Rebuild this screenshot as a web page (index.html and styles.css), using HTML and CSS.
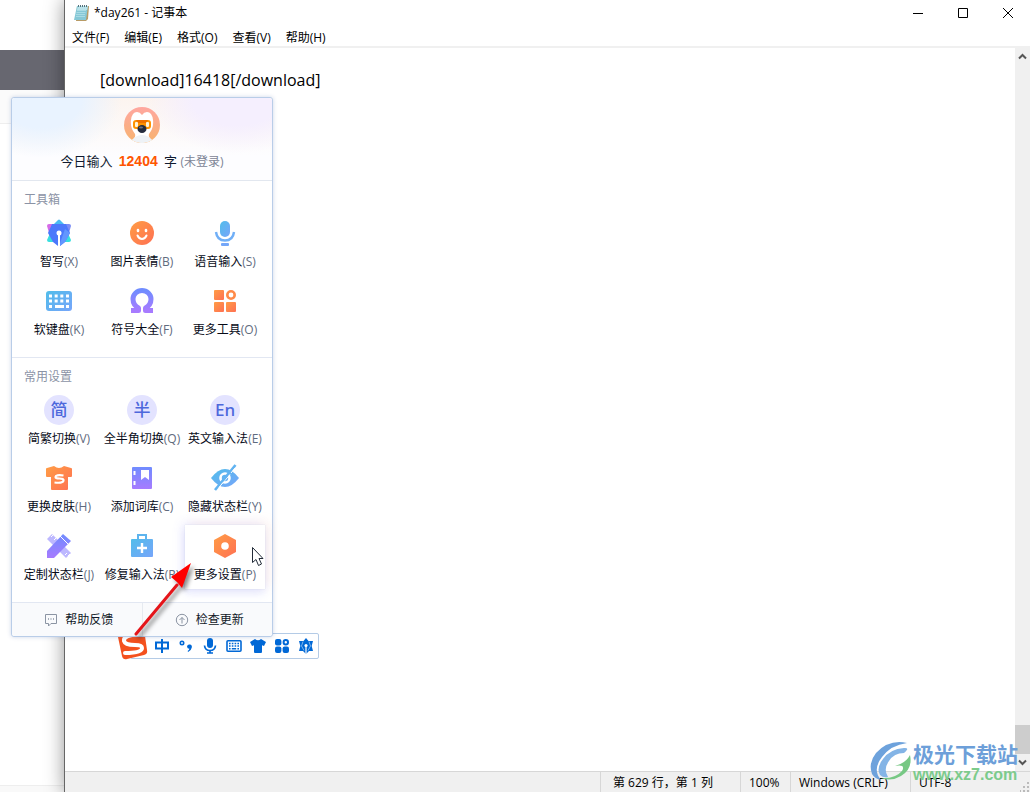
FILE: index.html
```html
<!DOCTYPE html>
<html lang="zh-CN">
<head>
<meta charset="utf-8">
<title>*day261 - 记事本</title>
<link rel="stylesheet" href="styles.css">
</head>
<body>
<div class="desktop">
  <div class="backdrop" aria-hidden="true">
    <div class="backdrop-top"></div>
    <div class="backdrop-band"></div>
    <div class="backdrop-tint"></div>
    <div class="backdrop-body"></div>
    <div class="backdrop-foot"></div>
  </div>

  <main class="window">
    <header class="titlebar">
      <svg class="app-icon" width="17" height="18" viewBox="0 0 17 18">
        <path d="M4 2h12l-1 13-2 2H3z" fill="#b89b66"/>
        <path d="M4 2h11l-2 14H1z" fill="#86c8d6"/>
        <path d="M5 2h10l-1 4H4z" fill="#b9e2ea"/>
        <path d="M4 6.500h9M3.500 8.500h9M3 10.500h9M3 12.500h9" stroke="#a9dbe4"/>
        <path d="M5.500 1v2M7.500 1v2M9.500 1v2M11.500 1v2M13.500 1v2" stroke="#54717a"/>
      </svg>
      <h1 class="title">*day261 - 记事本</h1>
      <div class="window-buttons">
        <button class="winbtn" aria-label="最小化"><svg width="12" height="12" viewBox="0 0 12 12"><path d="M1 6.500h10" stroke="#000"/></svg></button>
        <button class="winbtn" aria-label="最大化"><svg width="12" height="12" viewBox="0 0 12 12"><path d="M1.500 1.500h9v9h-9z" stroke="#000" fill="none"/></svg></button>
        <button class="winbtn" aria-label="关闭"><svg width="12" height="12" viewBox="0 0 12 12"><path d="M1 1l10 10M11 1L1 11" stroke="#000"/></svg></button>
      </div>
    </header>
    <nav class="menubar">
      <button>文件(F)</button><button>编辑(E)</button><button>格式(O)</button><button>查看(V)</button><button>帮助(H)</button>
    </nav>
    <div class="editor">
      <textarea class="text" aria-label="文本编辑器" spellcheck="false">[download]16418[/download]</textarea>
      <div class="scrollbar">
        <button class="scroll-btn" aria-label="向上滚动"><svg width="9" height="7" viewBox="0 0 9 7"><path d="M1 5.500L4.500 2 8 5.500" fill="none" stroke="#555" stroke-width="2"/></svg></button>
        <div class="track"><div class="thumb"></div></div>
        <button class="scroll-btn" aria-label="向下滚动"><svg width="9" height="7" viewBox="0 0 9 7"><path d="M1 1.500L4.500 5 8 1.500" fill="none" stroke="#555" stroke-width="2"/></svg></button>
      </div>
    </div>
    <footer class="statusbar">
      <span class="cell pos">第 629 行，第 1 列</span>
      <span class="cell zoom">100%</span>
      <span class="cell eol">Windows (CRLF)</span>
      <span class="cell enc">UTF-8</span>
      <svg class="grip" width="10" height="10" viewBox="0 0 10 10" fill="#bbb"><path d="M7 0h2v2H7zM7 4h2v2H7zM7 8h2v2H7zM3 4h2v2H3zM3 8h2v2H3zM0 8h1v2H0z"/></svg>
    </footer>
  </main>

  <div class="ime-bar">
    <button aria-label="中文">
      <svg width="16" height="16" viewBox="0 0 16 16"><path d="M2 4.500h12v6H2zM8 1v14" fill="none" stroke="#0068d6" stroke-width="2"/></svg>
    </button>
    <button aria-label="标点">
      <svg width="16" height="16" viewBox="0 0 16 16"><circle cx="4" cy="5" r="1.700" fill="none" stroke="#0068d6" stroke-width="1.600"/><path d="M9 8.500a2.400 2.400 0 1 1 4.800 1q-.6 3.300-3.700 4.500l-.5-1q1.600-.8 1.800-2.200-2.200 0-2.400-2.300z" fill="#0068d6"/></svg>
    </button>
    <button aria-label="语音">
      <svg width="16" height="16" viewBox="0 0 16 16"><rect x="5" y="0" width="6" height="10" rx="3" fill="#0068d6"/><path d="M2.500 7.500q.5 5 5.500 5t5.500-5M8 12v3M5 15h6" fill="none" stroke="#0068d6" stroke-width="1.700"/></svg>
    </button>
    <button aria-label="键盘">
      <svg width="16" height="16" viewBox="0 0 16 16"><rect x="1" y="2.800" width="14" height="10.400" rx="1" fill="#fff" stroke="#0068d6" stroke-width="1.600"/><path d="M3 5.500h10M3 8h10" stroke="#0068d6" stroke-width="1.600" stroke-dasharray="1.600 1.200"/><path d="M3 10.700h1.600M5.800 10.700h4.400M11.400 10.700H13" stroke="#0068d6" stroke-width="1.600"/></svg>
    </button>
    <button aria-label="皮肤">
      <svg width="16" height="16" viewBox="0 0 16 16"><path d="M5 1q3 2.500 6 0l5 3-2 4-2-.8V14q0 1-1 1H5q-1 0-1-1V7.200L2 8 0 4z" fill="#0068d6"/></svg>
    </button>
    <button aria-label="工具">
      <svg width="16" height="16" viewBox="0 0 16 16" fill="#0068d6"><rect x="1" y="1" width="6.400" height="6.400" rx="2"/><rect x="1" y="8.600" width="6.400" height="6.400" rx="2"/><rect x="8.600" y="8.600" width="6.400" height="6.400" rx="2"/><circle cx="11.800" cy="4.200" r="2.200" fill="none" stroke="#0068d6" stroke-width="2"/></svg>
    </button>
    <button aria-label="智写">
      <svg width="16" height="16" viewBox="0 0 16 16"><path d="M8 0l2.500 3H15l-1.300 5L15 13h-4l-3 3-3-3H1l1.300-5L1 3h4.500z" fill="#0068d6"/><path d="M5 3.500L3.500 8 6 12.500M11 3.500L12.500 8 10 12.500" fill="none" stroke="#fff" stroke-width=".5"/><path d="M8 8v8" stroke="#fff" stroke-width="1.200"/><circle cx="8" cy="7.500" r="1.600" fill="#fff"/></svg>
    </button>
    <svg class="ime-logo" width="32" height="28" viewBox="0 0 32 28">
      <path d="M1 5Q0 2 3 1l21-1q3 0 4 4l2 14q1 4-3 5L10 27q-4 1-5-3z" fill="#f4511e"/>
      <path d="M25 3Q6 2 7 9q1 4 11 4 7 0 7 3 0 5-17 5" fill="none" stroke="#fff" stroke-width="4" stroke-linecap="round"/>
    </svg>
  </div>

  <section class="popup" aria-label="输入法菜单">
    <svg class="defs" width="0" height="0" aria-hidden="true">
      <defs>
        <linearGradient id="orange" x1="0" y1="0" x2="1" y2="1"><stop stop-color="#ff9d45"/><stop offset="1" stop-color="#ff7053"/></linearGradient>
        <linearGradient id="blue" x1="0" y1="0" x2="1" y2="1"><stop stop-color="#51bdea"/><stop offset="1" stop-color="#77a5fa"/></linearGradient>
        <linearGradient id="violet" x1="0" y1="0" x2="0" y2="1"><stop stop-color="#708cff"/><stop offset="1" stop-color="#a77bff"/></linearGradient>
        <linearGradient id="skin" x1="0" y1="0" x2="0" y2="1"><stop stop-color="#ffa7a0"/><stop offset="1" stop-color="#f7b36e"/></linearGradient>
      </defs>
    </svg>

    <header class="profile">
      <svg class="avatar" width="38" height="38" viewBox="0 0 38 38">
        <circle cx="19" cy="19" r="18" fill="url(#skin)"/>
        <path d="M9 34q4-2 3-6-5-6-4-14 1-8 6-8 3 0 5 3 2-3 5-3 5 0 6 8 1 8-4 14-1 4 3 6-10 6-20 0z" fill="#fff"/>
        <path d="M12 31q7-4 14 0l3 3q-10 6-20 0z" fill="#eef2f6"/>
        <rect x="10" y="14" width="18" height="9" rx="3" fill="#ff9200"/>
        <path d="M13 14h12l-2 3h-8z" fill="#ef7100"/>
        <rect x="12" y="16" width="3" height="5" rx="1" fill="#fff3d8"/><rect x="23" y="16" width="3" height="5" rx="1" fill="#fff3d8"/>
        <ellipse cx="19" cy="23" rx="4.500" ry="4" fill="#252c3d"/><ellipse cx="18" cy="21.500" rx="2" ry="1" fill="#6b7080"/>
      </svg>
      <p class="count">今日输入 <strong>12404</strong> 字 <button class="login">(未登录)</button></p>
    </header>

    <section class="group">
      <h2>工具箱</h2>
      <div class="grid">
        <button class="item">
          <svg width="30" height="30" viewBox="0 0 30 30"><path d="M3 8q0-2 2-2h8L6 18z" fill="#d66be8"/><path d="M27 8q0-2-2-2h-8l7 12z" fill="#7a8cf5"/><path d="M3 22l4-9 5 11H5q-2 0-2-2zM27 22l-4-9-5 11h7q2 0 2-2z" fill="#38dfdf"/><path d="M14 2q1-1 2 0l6 6H8z" fill="#49baf2"/><path d="M8 6h14l4 9-5 9-5 4h-2l-5-4-5-9z" fill="#4b78fb"/><path d="M21 11l5 4-5 9-5 4h-1z" fill="#6296ff"/><path d="M15 16v14" stroke="#fff" stroke-width="2"/><circle cx="15" cy="15" r="2.500" fill="#fff"/></svg>
          <span>智写<i>(X)</i></span></button>
        <button class="item">
          <svg width="30" height="30" viewBox="0 0 30 30"><circle cx="15" cy="15" r="12" fill="url(#orange)"/><path d="M11 12v1M19 12v1" stroke="#fff" stroke-width="2.600" stroke-linecap="round"/><path d="M10.500 17.500q1.500 3.500 4.500 3.500t4.500-3.500" fill="none" stroke="#fff" stroke-width="2" stroke-linecap="round"/></svg>
          <span>图片表情<i>(B)</i></span></button>
        <button class="item">
          <svg width="30" height="30" viewBox="0 0 30 30"><rect x="10" y="3" width="10" height="16" rx="5" fill="url(#blue)"/><path d="M6 14q1 8.500 9 8.500t9-8.500" fill="none" stroke="#70aff7" stroke-width="2.400"/><rect x="11" y="25" width="8" height="3" rx="1" fill="#74a7f9"/></svg>
          <span>语音输入<i>(S)</i></span></button>
        <button class="item">
          <svg width="30" height="30" viewBox="0 0 30 30"><rect x="2" y="5" width="26" height="20" rx="3" fill="url(#blue)"/><path d="M5 10h20M5 15h20" stroke="#fff" stroke-width="3" stroke-dasharray="3 2.660"/><path d="M5 20.500h3M11 20.500h9M22 20.500h3" stroke="#fff" stroke-width="3"/></svg>
          <span>软键盘<i>(K)</i></span></button>
        <button class="item">
          <svg width="30" height="30" viewBox="0 0 30 30"><path d="M4 24.500h7.500v-2.500Q6 19 6 13a9 8.500 0 0 1 18 0q0 6-5.500 9v2.500H26" fill="none" stroke="url(#violet)" stroke-width="5" stroke-linejoin="round"/></svg>
          <span>符号大全<i>(F)</i></span></button>
        <button class="item">
          <svg width="30" height="30" viewBox="0 0 30 30" fill="url(#orange)"><rect x="4" y="4" width="10" height="10" rx="1"/><rect x="4" y="16" width="10" height="10" rx="1"/><rect x="16" y="16" width="10" height="10" rx="1"/><circle cx="21" cy="9" r="3.700" fill="none" stroke="#ff8a49" stroke-width="2.600"/></svg>
          <span>更多工具<i>(O)</i></span></button>
      </div>
    </section>

    <section class="group">
      <h2>常用设置</h2>
      <div class="grid">
        <button class="item"><b class="disc">简</b><span>简繁切换<i>(V)</i></span></button>
        <button class="item"><b class="disc">半</b><span>全半角切换<i>(Q)</i></span></button>
        <button class="item"><b class="disc">En</b><span>英文输入法<i>(E)</i></span></button>
        <button class="item">
          <svg width="30" height="30" viewBox="0 0 30 30"><path d="M10 3q5 4 10 0l7 2q1 0 1 1v7q0 1-1 1h-3v12q0 1-1 1H8q-1 0-1-1V14H3q-1 0-1-1V6q0-1 1-1z" fill="url(#orange)"/><path d="M19.500 12.500q-8-1-8 1.500 0 1.500 4 1.500 4.500 0 4 2-.5 3-9 2" fill="none" stroke="#fff" stroke-width="2.200"/></svg>
          <span>更换皮肤<i>(H)</i></span></button>
        <button class="item">
          <svg width="30" height="30" viewBox="0 0 30 30"><rect x="5" y="4" width="20" height="22" rx="1" fill="url(#violet)"/><path d="M14 7h8v10l-4-3-4 3z" fill="#fff"/><path d="M7.500 8v4M7.500 18v4" stroke="#fff" stroke-width="2"/></svg>
          <span>添加词库<i>(C)</i></span></button>
        <button class="item">
          <svg width="30" height="30" viewBox="0 0 30 30"><path d="M1 15Q8 6 15 6t14 9q-7 9-14 9T1 15z" fill="url(#blue)"/><circle cx="15" cy="15" r="4.500" fill="none" stroke="#fff" stroke-width="2.600"/><path d="M20 11.500L11 22" stroke="#fff" stroke-width="1"/><path d="M25.500 2L5 27" stroke="#61b3f1" stroke-width="2.600"/><path d="M9 24.500l4-5M21 10l4-5" stroke="#fff"/></svg>
          <span>隐藏状态栏<i>(Y)</i></span></button>
        <button class="item">
          <svg width="30" height="30" viewBox="0 0 30 30"><path d="M3 8l5-5 19 19-5 5z" fill="#bdb8ff"/><path d="M9 4L7 6M12 7l-2 2M21 24l2-2M24 25l2-2" stroke="#fff"/><path d="M19 3l8 7L10 27H3v-7z" fill="url(#violet)"/><path d="M16 5l8 8" stroke="#fff"/></svg>
          <span>定制状态栏<i>(J)</i></span></button>
        <button class="item">
          <svg width="30" height="30" viewBox="0 0 30 30"><path d="M11 8V4h8v4" fill="none" stroke="#5db4ee" stroke-width="2"/><rect x="4" y="8" width="22" height="18" rx="1" fill="url(#blue)"/><path d="M15 12v10M10 17h10" stroke="#fff" stroke-width="2.400"/></svg>
          <span>修复输入法<i>(R)</i></span></button>
        <button class="item active">
          <svg width="30" height="30" viewBox="0 0 30 30"><path d="M15 3l11 6v12l-11 6-11-6V9z" fill="url(#orange)"/><circle cx="15" cy="15" r="3.800" fill="#fff"/></svg>
          <span>更多设置<i>(P)</i></span></button>
      </div>
    </section>

    <footer class="links">
      <button><svg width="14" height="14" viewBox="0 0 14 14" fill="none" stroke="#8b94a3"><path d="M1.500 1.500h11v9H7l-2.500 2.500v-2.500h-3z"/><path d="M4 6h1M6.500 6h1M9 6h1" stroke-width="1.400"/></svg>帮助反馈</button>
      <button><svg width="14" height="14" viewBox="0 0 14 14" fill="none" stroke="#8b94a3"><circle cx="7" cy="7" r="5.700"/><path d="M7 10.500v-6M4.500 7L7 4.500 9.500 7"/></svg>检查更新</button>
    </footer>
  </section>

  <svg class="arrow" width="70" height="84" viewBox="0 0 70 84" aria-hidden="true">
    <path d="M6 75L47 26" stroke="#e5151a" stroke-width="3" stroke-linecap="round"/>
    <path d="M61 4L41 18l6 5 5 6z" fill="#f00"/>
  </svg>
  <svg class="cursor" width="14" height="21" viewBox="0 0 14 21" aria-hidden="true"><path d="M1.500 1.500v15l3.500-3 2.500 6 3-1.500-2.500-5.500h4z" fill="#fff" stroke="#222b38"/></svg>

  <div class="watermark" aria-hidden="true">
    <svg width="42" height="42" viewBox="0 0 42 42">
      <path d="M37 2Q19-2 6 12-2 22 2 33q3 5 9 6Q2 29 12 16 21 4 37 2z" fill="#6da2dc"/>
      <path d="M34 7Q20 8 13 18q-7 9-3 16 3 3 8 2-5-8 1-16 5-8 15-8 6-5 1-5z" fill="#83b4e6"/>
      <path d="M40 14Q43 28 31 35q-10 6-20 2 14 1 21-7 4-7-7-5 11-3 15-11z" fill="#77c884"/>
    </svg>
    <div class="mark-text"><span class="mark-name">极光下载站</span><span class="mark-url">www.xz7.com</span></div>
  </div>
</div>
</body>
</html>
```

FILE: styles.css
```css
* { box-sizing: border-box; }
body {
  margin: 0;
  font: 12px/20px "Open Sans", "Noto Sans CJK SC", sans-serif;
  color: #000;
}
h1, h2, p { margin: 0; font-size: inherit; font-weight: normal; }
i { font-style: normal; }
svg { display: block; flex: none; }
button {
  margin: 0;
  padding: 0;
  border: 0;
  background: none;
  font: inherit;
  color: inherit;
}

.desktop {
  position: relative;
  display: grid;
  grid-template-columns: 64px 1fr;
  height: 100vh;
  overflow: hidden;
  background: #fff;
}

/* page showing behind the window */
.backdrop { display: flex; flex-direction: column; }
.backdrop-top { height: 50px; }
.backdrop-band { height: 40px; background: #676770; }
.backdrop-tint { height: 34px; background: #fbfbfb; border-bottom: 1px solid #eee; }
.backdrop-body { flex: 1; }
.backdrop-foot { height: 7px; background: #f9f9f9; border-top: 1px solid #eee; }

/* notepad */
.window {
  display: flex;
  flex-direction: column;
  min-width: 0;
  background: #fff;
  border-left: 1px solid #666;
  box-shadow: 0 0 18px rgba(0, 0, 0, .42);
}
.titlebar { display: flex; align-items: center; height: 25px; padding-left: 8px; gap: 4px; }
.title { flex: 1; }
.window-buttons { display: flex; }
.winbtn { display: grid; place-items: center; width: 45px; height: 24px; }
.menubar {
  display: flex;
  gap: 15px;
  height: 23px;
  padding: 2px 7px 0;
  border-bottom: 2px solid #f0f0f0;
  line-height: 21px;
}
.editor { display: flex; flex: 1; min-height: 0; }
.text {
  flex: 1;
  padding: 20px 35px;
  border: 0;
  outline: 0;
  resize: none;
  overflow: hidden;
  background: none;
  font: 16px/24px "Open Sans", "Noto Sans CJK SC", sans-serif;
  color: #000;
}
.scrollbar { display: flex; flex-direction: column; width: 15px; background: #f0f0f0; }
.scroll-btn { display: grid; place-items: center; height: 17px; }
.track { display: flex; flex: 1; flex-direction: column; justify-content: flex-end; }
.thumb { height: 29px; background: #cdcdcd; }
.statusbar {
  display: flex;
  justify-content: flex-end;
  height: 21px;
  background: #f0f0f0;
  border-top: 1px solid #d7d7d7;
  line-height: 21px;
}
.cell { padding-left: 8px; border-left: 1px solid #d7d7d7; white-space: nowrap; }
.pos { width: 140px; padding-left: 12px; }
.zoom { width: 50px; }
.eol { width: 120px; }
.enc { width: 110px; }
.grip { align-self: flex-end; }

/* input method toolbar */
.ime-bar {
  position: absolute;
  left: 130px;
  top: 633px;
  display: flex;
  align-items: center;
  gap: 8px;
  height: 26px;
  padding: 0 4px 0 23px;
  background: #fff;
  border: 1px solid #b4cbe6;
  border-radius: 2px;
}
.ime-logo { position: absolute; left: -14px; top: -2px; }

/* input method menu */
.popup {
  position: absolute;
  left: 11px;
  top: 97px;
  width: 262px;
  background: #fff;
  border: 1px solid #b9cde8;
  border-radius: 3px;
  box-shadow: 0 0 4px rgba(90, 120, 180, .3);
}
.defs { position: absolute; }
.profile {
  display: flex;
  flex-direction: column;
  align-items: center;
  gap: 7px;
  height: 83px;
  padding-top: 8px;
  border-bottom: 1px solid #e2e7ef;
  border-radius: 3px 3px 0 0;
  background:
    radial-gradient(ellipse 80px 60px at 30px 0, #e9f3ff 50%, rgba(233, 243, 255, 0)),
    radial-gradient(ellipse 90px 55px at 225px 0, #f5effe 50%, rgba(245, 239, 254, 0)),
    linear-gradient(to bottom, #fcf4ef, #fdfdff 70%);
}
.count { font-size: 13px; color: #101a30; }
.count strong { margin: 0 3px; font: bold 14px/20px "Liberation Sans", sans-serif; color: #ff5500; }
.login { font-size: 12px; color: #7c8495; }
.group { padding: 9px 7px 13px; border-bottom: 1px solid #e2e7f2; }
.group h2 { padding: 0 5px 2px; color: #8b93a5; }
.grid { display: grid; grid-template-columns: repeat(3, 1fr); gap: 4px 3px; }
.item {
  display: flex;
  flex-direction: column;
  align-items: center;
  gap: 4px;
  min-width: 0;
  height: 64px;
  padding-top: 6px;
  white-space: nowrap;
  color: #070b18;
}
.item i { color: #5f6b7e; }
.active {
  background: #fff;
  box-shadow: 0 0 1px #c8d3e8, 5px -3px 10px rgba(255, 190, 160, .16), -3px -2px 10px rgba(110, 110, 255, .13), 0 5px 8px rgba(130, 150, 255, .16);
}
.disc {
  width: 30px;
  height: 30px;
  border-radius: 50%;
  background: #e3e3ff;
  font: 500 17px/30px "Noto Sans", "Noto Sans CJK SC", sans-serif;
  color: #4d68dc;
}
.links { display: flex; height: 33px; background: #f9fafc; border-radius: 0 0 3px 3px; }
.links button { display: flex; flex: 1; align-items: center; justify-content: center; gap: 7px; padding-left: 4px; color: #101827; }
.links button + button { border-left: 1px solid #e6eaf0; }

/* overlays */
.arrow { position: absolute; left: 130px; top: 559px; filter: drop-shadow(3px 3px 2px rgba(0, 0, 0, .45)); }
.cursor { position: absolute; left: 251px; top: 546px; }
.watermark { position: absolute; right: 12px; bottom: 7px; display: flex; gap: 1px; }
.mark-text { display: flex; flex-direction: column; }
.mark-name { font: bold 21px/24px "Noto Sans CJK SC", sans-serif; color: #6d9fd9; }
.mark-url { font: bold 16px/20px "Liberation Sans", sans-serif; color: #7ccb8c; }
```
